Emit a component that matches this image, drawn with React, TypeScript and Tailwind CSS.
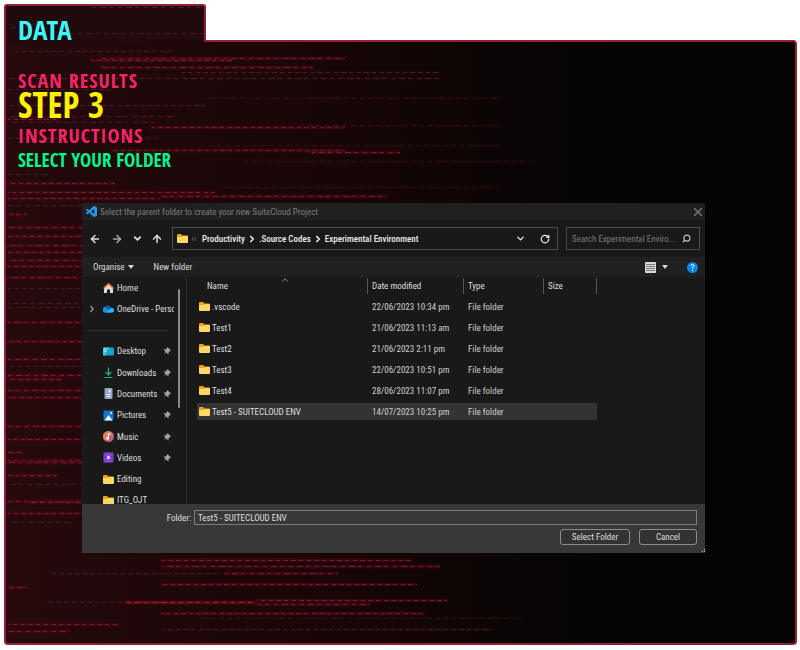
import type { ReactNode } from "react";
import { ArrowLeft, ArrowRight, ArrowUp, ChevronDown, ChevronRight, ChevronUp, ChevronsLeft, RotateCw, Search, X } from "lucide-react";

type Streak = [x1: number, x2: number, y: number, tone: "hot" | "red" | "dim"];

const streaks: Streak[] = [
  [90, 205, 7, "dim"], [6, 30, 27, "dim"], [60, 205, 33, "dim"], [8, 175, 51, "dim"],
  [100, 345, 58, "red"], [90, 233, 60, "red"], [100, 313, 67, "red"], [180, 440, 72, "dim"], [6, 440, 78, "dim"],
  [6, 113, 89, "dim"], [200, 500, 98, "dim"], [8, 205, 105, "dim"], [6, 175, 116, "dim"], [6, 60, 119, "red"],
  [6, 160, 122, "dim"], [150, 345, 127, "red"], [300, 500, 125, "dim"], [6, 160, 138, "dim"], [200, 500, 145, "dim"],
  [110, 345, 150, "red"], [310, 400, 152, "red"], [240, 530, 161, "dim"], [6, 48, 174, "dim"], [6, 115, 183, "red"],
  [220, 500, 187, "dim"], [6, 215, 192, "red"], [160, 387, 196, "red"], [6, 160, 198, "red"], [6, 140, 205, "dim"],
  [8, 27, 214, "red"], [6, 90, 227, "red"], [6, 90, 236, "red"], [6, 90, 245, "red"], [6, 90, 252, "red"],
  [6, 90, 260, "red"], [6, 90, 266, "red"], [6, 90, 277, "red"], [6, 90, 288, "dim"], [6, 90, 303, "dim"],
  [6, 90, 307, "dim"], [6, 90, 322, "red"], [6, 90, 341, "red"], [6, 90, 359, "red"], [6, 90, 366, "dim"],
  [6, 90, 375, "red"], [6, 62, 379, "red"], [6, 90, 390, "red"], [6, 90, 397, "red"], [6, 90, 426, "red"],
  [6, 90, 439, "red"], [6, 23, 452, "red"], [6, 90, 460, "red"], [6, 90, 462, "red"], [6, 57, 475, "red"],
  [6, 90, 484, "dim"], [6, 90, 501, "red"], [26, 90, 502, "red"], [6, 90, 513, "red"], [6, 70, 522, "dim"],
  [160, 412, 560, "red"], [160, 440, 566, "red"], [50, 220, 573, "dim"], [224, 338, 573, "red"],
  [160, 417, 584, "red"], [8, 27, 587, "red"], [45, 190, 602, "dim"], [125, 257, 602, "hot"],
  [256, 447, 600, "red"], [256, 370, 604, "red"], [160, 425, 613, "red"], [200, 521, 618, "dim"],
  [6, 120, 624, "red"], [6, 70, 631, "red"], [160, 492, 629, "dim"],
];

const tones = {
  hot: { core: "#c4212a", glow: "#7d0c16" },
  red: { core: "#782838", glow: "#5a0416" },
  dim: { core: "#45262a", glow: "#2c080d" },
};

function Scanlines({ dx, dy }: { dx: number; dy: number }) {
  return (
    <svg className="absolute inset-0 size-full" aria-hidden="true">
      <g transform={`translate(${-dx} ${-dy})`}>
        {streaks.map(([x1, x2, y, tone], i) => (
          <g key={i} opacity={x1 > 190 && tone === "dim" ? 0.45 : 0.85}>
            <line x1={x1} x2={x2} y1={y + 0.5} y2={y + 0.5} stroke={tones[tone].glow} strokeWidth="5" opacity="0.25" />
            <line x1={x1} x2={x2} y1={y + 0.5} y2={y + 0.5} stroke={tones[tone].glow} strokeWidth="3" opacity="0.45" />
            <line
              x1={x1 + 2} x2={x2} y1={y + 0.5} y2={y + 0.5} stroke={tones[tone].core}
              strokeDasharray={i % 2 ? "5 3 4 4 4 3" : "4 4 6 3 4 5"} strokeDashoffset={(i * 5) % 11}
            />
          </g>
        ))}
      </g>
    </svg>
  );
}

function FolderIcon() {
  return (
    <svg viewBox="0 0 22 18" className="h-[9px] w-[11px] shrink-0" aria-hidden="true">
      <path d="M0 2q0-2 2-2h6l3 3h9q2 0 2 2v5H0z" fill="#f0a30a" />
      <path d="M0 6h9l3-2h8q2 0 2 2v10q0 2-2 2H2q-2 0-2-2z" fill="#ffd766" />
    </svg>
  );
}

const icon = "size-[11px] shrink-0";

const HomeIcon = (
  <svg viewBox="0 0 22 22" className={icon} aria-hidden="true">
    <path d="M2 10 11 3l9 7v12h-6v-7H8v7H2z" fill="#dedbd9" />
    <path d="M2 12 11 3l9 9" fill="none" stroke="#e8662b" strokeWidth="3" strokeLinecap="round" strokeLinejoin="round" />
  </svg>
);
const CloudIcon = (
  <svg viewBox="0 0 22 22" className={icon} aria-hidden="true">
    <path d="M5 19a5 5 0 0 1-1-11 8 8 0 0 1 13 2 4 4 0 0 1 1 9z" fill="#1490df" />
    <path d="M4 8a8 8 0 0 1 13 2l-6 4z" fill="#0a5fb4" />
    <path d="M5 19 17 10a4 4 0 0 1 1 9z" fill="#35b0f5" />
  </svg>
);
const DesktopIcon = (
  <svg viewBox="0 0 22 22" className={icon} aria-hidden="true">
    <rect y="3" width="22" height="16" rx="2" fill="#1f9fd0" />
    <path d="M0 5q0-2 2-2h10L4 19H2q-2 0-2-2z" fill="#3ccbe0" />
    <path d="M3 7h2M3 11h2" stroke="#fff" strokeWidth="2" />
  </svg>
);
const DownloadIcon = (
  <svg viewBox="0 0 22 22" className={icon} fill="none" stroke="#1fb58a" strokeWidth="2.4" aria-hidden="true">
    <path d="M11 1v15M5 10l6 6 6-6M3 21h16" />
  </svg>
);
const DocumentIcon = (
  <svg viewBox="0 0 22 22" className={icon} aria-hidden="true">
    <rect x="3" width="16" height="22" rx="2" fill="#93a7bf" />
    <path d="M7 13h8M7 17h8" stroke="#e9f0f7" strokeWidth="2" />
    <rect x="11" y="4" width="4" height="5" fill="#e9f0f7" />
  </svg>
);
const PictureIcon = (
  <svg viewBox="0 0 22 22" className={icon} aria-hidden="true">
    <rect x="1" y="1" width="20" height="20" rx="2" fill="#1277c9" />
    <path d="m3 21 8-11 8 11z" fill="#f3f9ff" />
    <circle cx="16" cy="6" r="2" fill="#f3f9ff" />
  </svg>
);
const MusicIcon = (
  <svg viewBox="0 0 22 22" className={icon} aria-hidden="true">
    <circle cx="11" cy="11" r="11" fill="#c4607c" />
    <path d="M0 11a11 11 0 0 1 19-7L4 19a11 11 0 0 1-4-8z" fill="#e0805f" />
    <path d="M11 15V5l4 2" fill="none" stroke="#fff" strokeWidth="2" />
    <circle cx="9" cy="15" r="2.6" fill="#fff" />
  </svg>
);
const VideoIcon = (
  <svg viewBox="0 0 22 22" className={icon} aria-hidden="true">
    <rect x="1" y="1" width="20" height="20" rx="2" fill="#8548d8" />
    <path d="M4 3v17M18 3v17" stroke="#4d2496" strokeWidth="2" strokeDasharray="3 3" />
    <path d="m9 7 6 4-6 4z" fill="#fff" />
  </svg>
);

function PinIcon() {
  return (
    <svg viewBox="0 0 16 16" className="size-[8px] shrink-0" aria-hidden="true">
      <path d="m9 0 7 7-2 1-3 3v4L6 11l-5 4 4-5-4-5h4l3-3z" fill="#9ba3aa" />
    </svg>
  );
}

type Place = { name: string; glyph: ReactNode; pinned?: boolean; expandable?: boolean };

const places: (Place | null)[] = [
  { name: "Home", glyph: HomeIcon },
  { name: "OneDrive - Personal", glyph: CloudIcon, expandable: true },
  null,
  { name: "Desktop", glyph: DesktopIcon, pinned: true },
  { name: "Downloads", glyph: DownloadIcon, pinned: true },
  { name: "Documents", glyph: DocumentIcon, pinned: true },
  { name: "Pictures", glyph: PictureIcon, pinned: true },
  { name: "Music", glyph: MusicIcon, pinned: true },
  { name: "Videos", glyph: VideoIcon, pinned: true },
  { name: "Editing", glyph: <FolderIcon /> },
  { name: "ITG_OJT", glyph: <FolderIcon /> },
];

const files = [
  [".vscode", "22/06/2023 10:34 pm"],
  ["Test1", "21/06/2023 11:13 am"],
  ["Test2", "21/06/2023 2:11 pm"],
  ["Test3", "22/06/2023 10:51 pm"],
  ["Test4", "28/06/2023 11:07 pm"],
  ["Test5 - SUITECLOUD ENV", "14/07/2023 10:25 pm"],
];

function Caret() {
  return (
    <svg viewBox="0 0 6 4" className="h-[4px] w-[6px]" aria-hidden="true">
      <path d="M0 0h6L3 4z" fill="#d5d5d5" />
    </svg>
  );
}

function FolderDialog() {
  return (
    <section
      aria-label="Select the parent folder"
      className="relative mt-[29px] mr-[90px] ml-[76px] bg-[#191919] font-['Roboto_Condensed',Roboto,sans-serif] text-[9px] leading-[12px] text-[#dedede]"
    >
      <header className="flex h-[17px] items-center bg-[#202020] pl-[4px] text-[#7c7c7c]">
        <svg viewBox="0 0 24 24" className="mr-[3px] size-[11px]" aria-hidden="true">
          <path
            fill="#1f9cf0"
            d="M23.15 2.587 18.21.21a1.494 1.494 0 0 0-1.705.29l-9.46 8.63-4.12-3.128a.999.999 0 0 0-1.276.057L.327 7.261A1 1 0 0 0 .326 8.74L3.899 12 .326 15.26a1 1 0 0 0 .001 1.479L1.65 17.94a.999.999 0 0 0 1.276.057l4.12-3.128 9.46 8.63a1.492 1.492 0 0 0 1.704.29l4.942-2.377A1.5 1.5 0 0 0 24 20.06V3.939a1.5 1.5 0 0 0-.85-1.352zm-5.146 14.861L10.826 12l7.178-5.448z"
          />
        </svg>
        <h2>Select the parent folder to create your new SuiteCloud Project</h2>
        <button aria-label="Close" className="ml-auto"><X className="size-[14px]" strokeWidth={2} /></button>
      </header>

      <nav aria-label="Location" className="flex h-[37px] items-center pr-[5px] pl-[7px]">
        <button aria-label="Back" className="mr-[10px]"><ArrowLeft className="size-[12px]" strokeWidth={3} /></button>
        <button aria-label="Forward" className="mr-[9px] text-[#a5a5a5]"><ArrowRight className="size-[12px]" strokeWidth={3} /></button>
        <button aria-label="Recent" className="mr-[8px]"><ChevronDown className="size-[11px]" strokeWidth={4} /></button>
        <button aria-label="Up" className="mr-[9px]"><ArrowUp className="size-[12px]" strokeWidth={3} /></button>
        <div className="flex h-[23px] flex-1 items-center border border-[#4c4c4c] pr-[7px] pl-[4px] font-medium text-[#ececec]">
          <FolderIcon />
          <ChevronsLeft className="mx-[2px] size-[8px] text-[#777]" />
          <ol className="flex items-center">
            <li className="flex items-center pl-[2px]"><a href="#productivity">Productivity</a><ChevronRight className="mx-[2px] size-[10px]" strokeWidth={4} /></li>
            <li className="flex items-center"><a href="#source">.Source Codes</a><ChevronRight className="mx-[2px] size-[10px]" strokeWidth={4} /></li>
            <li><a href="#experimental">Experimental Environment</a></li>
          </ol>
          <button aria-label="History" className="ml-auto"><ChevronDown className="size-[11px]" strokeWidth={3} /></button>
          <button aria-label="Refresh" className="ml-[14px]"><RotateCw className="size-[10px]" strokeWidth={3} /></button>
        </div>
        <div className="ml-[8px] flex h-[23px] w-[134px] items-center border border-[#4c4c4c] pr-[8px] pl-[5px]">
          <input
            type="text" aria-label="Search" placeholder="Search Experimental Enviro..."
            className="min-w-0 flex-1 bg-transparent outline-none placeholder:text-[#7a7a7a]"
          />
          <Search className="size-[9px] -scale-x-100 text-[#c0c0c0]" strokeWidth={3} />
        </div>
      </nav>

      <div className="flex h-[20px] items-center bg-[#202020] pr-[7px] pl-[11px]">
        <button className="flex items-center gap-[3px]">Organise <Caret /></button>
        <button className="ml-[20px]">New folder</button>
        <button aria-label="Change view" className="ml-auto flex items-center gap-[6px]">
          <svg viewBox="0 0 11 11" className="size-[11px]" aria-hidden="true">
            <rect width="11" height="11" rx="1" fill="#d8d8d8" />
            <path d="M1 2.5h9M1 4.5h9M1 6.5h9M1 8.5h9" stroke="#7b7b7b" />
          </svg>
          <Caret />
        </button>
        <button aria-label="Help" className="ml-[19px]">
          <svg viewBox="0 0 22 22" className="size-[11px]" aria-hidden="true">
            <circle cx="11" cy="11" r="11" fill="#0c86e0" />
            <path d="M8 8q0-3 3-3t3 3q0 2-3 3v3M11 16v2" fill="none" stroke="#fff" strokeWidth="2" />
          </svg>
        </button>
      </div>

      <div className="flex h-[227px]">
        <aside className="flex h-full w-[105px] shrink-0 border-r border-[#2b2b2b]">
          <ul className="grid h-[234px] w-[92px] auto-rows-fr [clip-path:inset(0_0_7px_0)]">
            {places.map((p, i) =>
              p ? (
                <li key={p.name} className="flex min-w-0 items-center overflow-hidden pl-[7px]">
                  <span className="w-[14px] shrink-0">
                    {p.expandable && <ChevronRight className="-ml-[2px] size-[10px] text-[#9a9a9a]" strokeWidth={3} />}
                  </span>
                  {p.glyph}
                  <a href={`#place-${i}`} className="ml-[3px] whitespace-nowrap">{p.name}</a>
                  {p.pinned && <span className="ml-auto pr-[3px]"><PinIcon /></span>}
                </li>
              ) : (
                <li key="rule" role="separator" className="mr-[6px] ml-[5px] h-px self-center bg-[#333]" />
              ),
            )}
          </ul>
          <div className="mt-[12px] ml-[4px] h-[119px] w-[2px] rounded-full bg-[#8a8a8a]" />
        </aside>

        <div className="min-w-0 flex-1 pl-[10px]">
          <table className="-mt-[3px] w-[400px] table-fixed border-separate border-spacing-x-0 border-spacing-y-[4px] text-left">
            <colgroup>
              <col className="w-[171px]" />
              <col className="w-[96px]" />
              <col className="w-[80px]" />
              <col className="w-[53px]" />
            </colgroup>
            <thead>
              <tr className="h-[16px]">
                <th className="relative border-r border-[#555] p-0 pl-[10px] font-normal">
                  Name
                  <ChevronUp className="absolute -top-[3px] left-[83px] size-[10px] text-[#a0a0a0]" />
                </th>
                <th className="border-r border-[#555] p-0 pl-[4px] font-normal">Date modified</th>
                <th className="border-r border-[#555] p-0 pl-[4px] font-normal">Type</th>
                <th className="border-r border-[#555] p-0 pl-[4px] font-normal">Size</th>
              </tr>
            </thead>
            <tbody>
              {files.map(([name, date], i) => (
                <tr key={name} className={i === files.length - 1 ? "h-[17px] bg-[#333]" : "h-[17px]"}>
                  <td className="p-0 pl-[2px]">
                    <span className="flex items-center gap-[2px]"><FolderIcon />{name}</span>
                  </td>
                  <td className="p-0 pl-[4px] text-[#cfcfcf]">{date}</td>
                  <td className="p-0 pl-[4px] text-[#cfcfcf]">File folder</td>
                  <td className="p-0" />
                </tr>
              ))}
            </tbody>
          </table>
        </div>
      </div>

      <footer className="h-[49px] bg-[#383838] pt-[6px] pr-[8px]">
        <div className="flex h-[15px] items-center">
          <label htmlFor="folder" className="w-[109px] text-right">Folder:</label>
          <input
            id="folder" defaultValue="Test5 - SUITECLOUD ENV"
            className="ml-[3px] h-[15px] min-w-0 flex-1 border border-[#7d7d7d] bg-[#383838] px-[3px] outline-none"
          />
        </div>
        <div className="mt-[4px] flex justify-end gap-[9px]">
          <button className="h-[16px] w-[70px] rounded-[3px] border border-[#8c8c8c] bg-[#333] leading-[14px]">Select Folder</button>
          <button className="h-[16px] w-[58px] rounded-[3px] border border-[#8c8c8c] bg-[#333] leading-[14px]">Cancel</button>
        </div>
      </footer>
      <svg viewBox="0 0 4 4" className="absolute right-0 bottom-0 size-[4px]" aria-hidden="true">
        <path d="M3 0h1v1H3zM1 2h1v1H1zM3 2h1v1H3z" fill="#ccc" />
      </svg>
    </section>
  );
}

export default function App() {
  return (
    <div className="flex min-h-screen flex-col bg-white pt-[4px] pr-[3px] pb-[5px] pl-[4px] font-['Open_Sans_Condensed','Roboto_Condensed',sans-serif] font-bold uppercase">
      <div className="relative z-10 -mb-[2px] h-[38px] w-[202px] rounded-t-[3px] border-2 border-b-0 border-[#941f38] bg-[#200a0b]">
        <Scanlines dx={6} dy={6} />
        <h1 className="relative pl-[12px] text-[27px] leading-[48px] text-[#3ff6ff]">Data</h1>
      </div>
      <main className="relative flex-1 overflow-hidden rounded-[4px] rounded-tl-none border-2 border-[#941f38] bg-linear-to-r from-[#260a0c] via-[#180606] via-40% to-[#040404] to-80% pt-[28px] pb-[12px]">
        <Scanlines dx={6} dy={42} />
        <dl className="relative pl-[12px]">
          <dt className="text-[20px] leading-[21px] tracking-wider text-[#fb2468]">Scan results</dt>
          <dd className="text-[35px] leading-[28px] text-[#fff200]">Step 3</dd>
          <dt className="mt-[6px] text-[20px] leading-[21px] tracking-wider text-[#fb2468]">Instructions</dt>
          <dd className="text-[19px] leading-[28px] text-[#00f58c]">Select your folder</dd>
        </dl>
        <div className="font-normal normal-case">
          <FolderDialog />
        </div>
      </main>
    </div>
  );
}
